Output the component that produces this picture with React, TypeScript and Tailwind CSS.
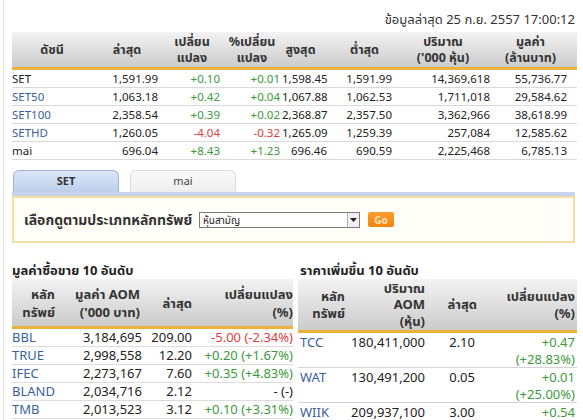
import React from 'react';

type Idx = { n: string; blue: boolean; v: string[] };

const idx: Idx[] = [
  { n: 'SET', blue: false, v: ['1,591.99', '+0.10', '+0.01', '1,598.45', '1,591.99', '14,369,618', '55,736.77'] },
  { n: 'SET50', blue: true, v: ['1,063.18', '+0.42', '+0.04', '1,067.88', '1,062.53', '1,711,018', '29,584.62'] },
  { n: 'SET100', blue: true, v: ['2,358.54', '+0.39', '+0.02', '2,368.87', '2,357.50', '3,362,966', '38,618.99'] },
  { n: 'SETHD', blue: true, v: ['1,260.05', '-4.04', '-0.32', '1,265.09', '1,259.39', '257,084', '12,585.62'] },
  { n: 'mai', blue: false, v: ['696.04', '+8.43', '+1.23', '696.46', '690.59', '2,225,468', '6,785.13'] },
];

const topVal = [
  { n: 'BBL', a: '3,184,695', l: '209.00', c: '-5.00 (-2.34%)' },
  { n: 'TRUE', a: '2,998,558', l: '12.20', c: '+0.20 (+1.67%)' },
  { n: 'IFEC', a: '2,273,167', l: '7.60', c: '+0.35 (+4.83%)' },
  { n: 'BLAND', a: '2,034,716', l: '2.12', c: '- (-)' },
  { n: 'TMB', a: '2,013,523', l: '3.12', c: '+0.10 (+3.31%)' },
];

const gainers = [
  { n: 'TCC', a: '180,411,000', l: '2.10', c1: '+0.47', c2: '(+28.83%)' },
  { n: 'WAT', a: '130,491,200', l: '0.05', c1: '+0.01', c2: '(+25.00%)' },
  { n: 'WIIK', a: '209,937,100', l: '3.00', c1: '+0.54', c2: '' },
];

function col(s: string) {
  if (s.startsWith('+')) return 'text-[#3b9a3b]';
  if (s.startsWith('-') && s !== '- (-)') return 'text-[#e23b3b]';
  return 'text-[#222]';
}

const hdr = 'bg-linear-to-b from-[#f3f3f3] to-[#cbcbcb] border-b-[3px] border-[#ebb33a] font-bold text-[#333]';

export default function App() {
  return (
    <div className="w-[583px] h-[420px] overflow-hidden bg-white [font-family:Tahoma,'Noto_Sans','Noto_Sans_Thai',sans-serif] text-[#222]">
      <div className="ml-[3px] h-full border-l border-[#e2e2e2] pl-[8px] pr-[6px] pt-[10px]">
        {/* date */}
        <div className="h-[18px] leading-[18px] text-[13px] text-right pr-[2px] text-[#333]">
          ข้อมูลล่าสุด 25 ก.ย. 2557 17:00:12
        </div>

        {/* index table */}
        <div className="mt-[4px] w-[565px]">
          <div className={`grid grid-cols-[80px_70px_60px_60px_47px_65px_98px_85px] h-[38px] text-[12.5px] leading-[16px] ${hdr}`}>
            <div className="flex items-center justify-center">ดัชนี</div>
            <div className="flex items-center justify-center">ล่าสุด</div>
            <div className="flex items-center justify-center text-center">เปลี่ยน<br />แปลง</div>
            <div className="flex items-center justify-center text-center">%เปลี่ยน<br />แปลง</div>
            <div className="flex items-center justify-center pr-[10px]">สูงสุด</div>
            <div className="flex items-center justify-center pl-[6px]">ต่ำสุด</div>
            <div className="flex items-center justify-center text-center">ปริมาณ<br />('000 หุ้น)</div>
            <div className="flex items-center justify-center text-center pr-[8px]">มูลค่า<br />(ล้านบาท)</div>
          </div>
          {idx.map((r) => (
            <div key={r.n} className="grid grid-cols-[80px_70px_60px_60px_47px_65px_98px_85px] h-[18px] items-center border-b border-[#d9d9d9] text-[11.5px] leading-[17px] whitespace-nowrap">
              <div className={r.blue ? 'text-[#3a5f9f]' : 'text-[#222]'}>{r.n}</div>
              <div className="text-right pr-[4px]">{r.v[0]}</div>
              <div className={`text-right pr-[2px] ${col(r.v[1])}`}>{r.v[1]}</div>
              <div className={`text-right pr-[2px] ${col(r.v[2])}`}>{r.v[2]}</div>
              <div className="text-right pr-[2px]">{r.v[3]}</div>
              <div className="text-right pr-[2px]">{r.v[4]}</div>
              <div className="text-right pr-[2px]">{r.v[5]}</div>
              <div className="text-right pr-[10px]">{r.v[6]}</div>
            </div>
          ))}
        </div>

        {/* tabs */}
        <div className="mt-[10px] flex h-[22px] items-end gap-[11px] pl-px">
          <div className="w-[106px] h-[22px] rounded-t-[6px] border border-b-0 border-[#9bb1d6] bg-linear-to-b from-[#dbe6f6] to-[#bccfeb] flex items-center justify-center text-[11px] font-bold text-[#333]">
            SET
          </div>
          <div className="w-[106px] h-[22px] rounded-t-[6px] border border-b-0 border-[#dddddd] bg-linear-to-b from-[#fafafa] to-[#eeeeee] flex items-center justify-center text-[11px] text-[#444]">
            mai
          </div>
        </div>
        <div className="h-[4px] w-[563px] bg-[#c6d4ee]" />
        <div className="h-[47px] w-[563px] border-2 border-[#f2dfa2] bg-[#fffef8] flex items-center pl-[10px]">
          <div className="w-[175px] text-[14px] font-bold text-[#333] whitespace-nowrap">เลือกดูตามประเภทหลักทรัพย์</div>
          <div className="w-[161px] h-[16px] border border-[#7b7b7b] bg-white flex items-center">
            <div className="flex-1 pl-[3px] text-[10px] leading-[14px] text-[#222]">หุ้นสามัญ</div>
            <div className="w-[12px] h-[14px] border-l border-[#b5b5b5] bg-[#f1f1f1] flex items-center justify-center">
              <svg width="7" height="4" viewBox="0 0 7 4"><path d="M0 0h7L3.5 4z" fill="#222" /></svg>
            </div>
          </div>
          <div className="ml-[8px] w-[26px] h-[15px] rounded-[2px] bg-linear-to-b from-[#fb9c2c] to-[#f2850f] flex items-center justify-center text-[10px] font-bold text-[#fde3bd] leading-none">
            Go
          </div>
        </div>

        {/* bottom */}
        <div className="mt-[19px] flex gap-[5px]">
          {/* left */}
          <div className="w-[281px]">
            <div className="h-[16px] leading-[16px] text-[13px] font-bold text-[#222] mb-px">มูลค่าซื้อขาย 10 อันดับ</div>
            <div className={`grid grid-cols-[46px_84px_51px_100px] h-[50px] text-[13px] leading-[18px] ${hdr}`}>
              <div className="flex items-center justify-end text-right pr-[3px]">หลัก<br />ทรัพย์</div>
              <div className="flex items-center justify-end text-right pr-[2px]">มูลค่า AOM<br />('000 บาท)</div>
              <div className="flex items-center justify-end pr-[1px]">ล่าสุด</div>
              <div className="flex items-center justify-end text-right">เปลี่ยนแปลง<br />(%)</div>
            </div>
            {topVal.map((r) => (
              <div key={r.n} className="grid grid-cols-[46px_84px_51px_100px] h-[18px] items-center border-b border-[#dcdcdc] text-[13px] leading-[17px] whitespace-nowrap">
                <div className="text-[#3a5f9f]">{r.n}</div>
                <div className="text-right">{r.a}</div>
                <div className="text-right pr-px">{r.l}</div>
                <div className={`text-right ${col(r.c)}`}>{r.c}</div>
              </div>
            ))}
          </div>
          {/* right */}
          <div className="w-[279px]">
            <div className="h-[16px] leading-[16px] text-[13px] font-bold text-[#222] mb-px pl-[2px]">ราคาเพิ่มขึ้น 10 อันดับ</div>
            <div className={`grid grid-cols-[50px_79px_51px_99px] h-[54px] text-[13px] leading-[16.5px] ${hdr}`}>
              <div className="flex items-center justify-end text-right pr-[3px]">หลัก<br />ทรัพย์</div>
              <div className="flex items-center justify-end text-right pr-[2px]">ปริมาณ<br />AOM<br />(หุ้น)</div>
              <div className="flex items-center justify-end pr-[1px]">ล่าสุด</div>
              <div className="flex items-center justify-end text-right pr-[2px]">เปลี่ยนแปลง<br />(%)</div>
            </div>
            {gainers.map((r) => (
              <div key={r.n} className="grid grid-cols-[50px_79px_51px_99px] h-[35px] items-start pt-px border-b border-[#d4d4d4] text-[13px] leading-[17px] whitespace-nowrap">
                <div className="text-[#3a5f9f] pl-[2px]">{r.n}</div>
                <div className="text-right pr-[2px]">{r.a}</div>
                <div className="text-right pr-[3px]">{r.l}</div>
                <div className="text-right pr-[2px] text-[#3b9a3b]">
                  {r.c1}
                  {r.c2 && <br />}
                  {r.c2}
                </div>
              </div>
            ))}
          </div>
        </div>
      </div>
    </div>
  );
}
